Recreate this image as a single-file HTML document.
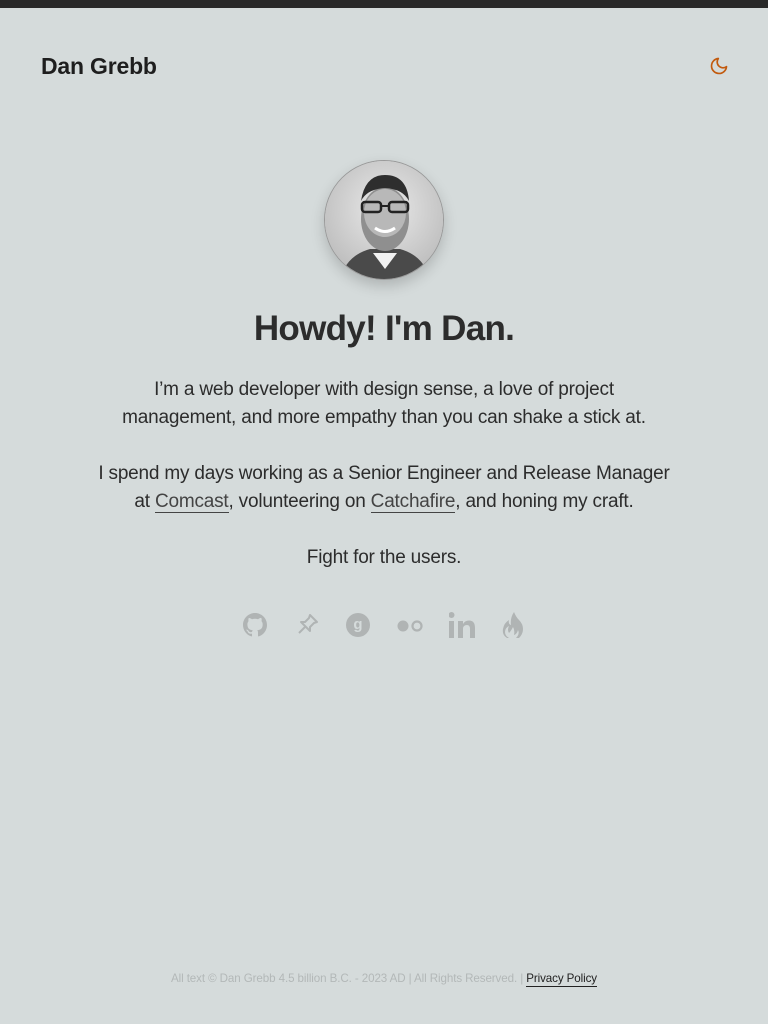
<!DOCTYPE html>
<html><head><meta charset="utf-8"><style>
*{margin:0;padding:0;box-sizing:border-box}
html,body{width:768px;height:1024px;background:#d5dbdb;font-family:"Liberation Sans",sans-serif;color:#2a2a2a;overflow:hidden}
.top{height:8px;background:#292929}
.logo{position:absolute;left:41px;top:53px;font-size:23px;font-weight:bold;letter-spacing:-0.2px;color:#1e1e1e}
.moon{position:absolute;left:709px;top:56px}
.av{position:absolute;left:324px;top:160px;width:120px;height:120px;border-radius:50%;overflow:hidden;box-shadow:0 6px 14px rgba(0,0,0,.18);border:1px solid #999}
h1{position:absolute;top:309px;width:768px;text-align:center;font-size:35px;letter-spacing:-0.7px;color:#2c2c2c}
p{position:absolute;width:768px;text-align:center;font-size:19px;line-height:28px;color:#2c2c2c;letter-spacing:-0.2px}
a{color:#444;text-decoration:none;border-bottom:1px solid #444}
.icons{position:absolute;top:612px;left:0;width:768px}
.icons svg{position:absolute;top:0}
.foot{position:absolute;top:972px;width:768px;text-align:center;font-size:11.6px;color:#b3b8b8;letter-spacing:-0.1px}
.foot a{color:#222;border-bottom:1px solid #222;padding-bottom:1px}
</style></head><body>
<div class="top"></div>
<div class="logo">Dan Grebb</div>
<svg class="moon" width="20" height="20" viewBox="0 0 24 24" fill="none" stroke="#c25a0e" stroke-width="2" stroke-linecap="round" stroke-linejoin="round"><path d="M21 12.79A9 9 0 1 1 11.21 3 7 7 0 0 0 21 12.79z"/></svg>
<div class="av"><svg width="120" height="120" viewBox="0 0 120 120">
<defs><radialGradient id="g" cx="50%" cy="40%" r="70%"><stop offset="0" stop-color="#eaeaea"/><stop offset="1" stop-color="#b5b5b5"/></radialGradient></defs>
<rect width="120" height="120" fill="url(#g)"/>
<path d="M15 120 Q20 95 45 88 L75 88 Q100 95 105 120Z" fill="#4a4a4a"/>
<path d="M48 92 L60 108 L72 92 Z" fill="#f2f2f2"/>
<ellipse cx="60" cy="58" rx="24" ry="32" fill="#8f8f8f"/>
<ellipse cx="60" cy="52" rx="21" ry="24" fill="#b8b8b8"/>
<path d="M36 40 Q40 14 60 14 Q82 14 84 40 Q78 28 60 27 Q42 28 36 40Z" fill="#2e2e2e"/>
<rect x="37" y="41" width="19" height="10" rx="3" fill="none" stroke="#222" stroke-width="2.5"/>
<rect x="64" y="41" width="19" height="10" rx="3" fill="none" stroke="#222" stroke-width="2.5"/>
<path d="M56 45 L64 45" stroke="#222" stroke-width="2"/>
<path d="M50 67 Q60 74 70 67" stroke="#fff" stroke-width="3" fill="none"/>
</svg></div>
<h1>Howdy! I'm Dan.</h1>
<p style="top:376px">I’m a web developer with design sense, a love of project<br>management, and more empathy than you can shake a stick at.</p>
<p style="top:460px">I spend my days working as a Senior Engineer and Release Manager<br>at <a>Comcast</a>, volunteering on <a>Catchafire</a>, and honing my craft.</p>
<p style="top:544px">Fight for the users.</p>
<div class="icons">
<svg style="left:243px" width="24" height="26" viewBox="0 0 16 16" fill="#b0b4b4"><path d="M8 0C3.58 0 0 3.58 0 8c0 3.54 2.29 6.53 5.47 7.59.4.07.55-.17.55-.38 0-.19-.01-.82-.01-1.49-2.01.37-2.53-.49-2.69-.94-.09-.23-.48-.94-.82-1.13-.28-.15-.68-.52-.01-.53.63-.01 1.08.58 1.23.82.72 1.21 1.87.87 2.33.66.07-.52.28-.87.51-1.07-1.78-.2-3.64-.89-3.64-3.95 0-.87.31-1.59.82-2.15-.08-.2-.36-1.02.08-2.12 0 0 .67-.21 2.2.82.64-.18 1.32-.27 2-.27.68 0 1.36.09 2 .27 1.53-1.04 2.2-.82 2.2-.82.44 1.1.16 1.92.08 2.12.51.56.82 1.27.82 2.15 0 3.07-1.87 3.75-3.65 3.95.29.25.54.73.54 1.48 0 1.07-.01 1.93-.01 2.2 0 .21.15.46.55.38A8.013 8.013 0 0016 8c0-4.42-3.58-8-8-8z"/></svg>
<svg style="left:296px" width="24" height="24" viewBox="0 0 24 24" fill="none" stroke="#b0b4b4" stroke-width="2" stroke-linejoin="round"><path d="M14 3 L21 10 L18 11 L14 15 L14 19 L5 10 L9 10 L13 6 Z M9.5 14.5 L3 21"/></svg>
<svg style="left:346px" width="24" height="26" viewBox="0 0 24 24"><circle cx="12" cy="12" r="12" fill="#b0b4b4"/><text x="12" y="16" text-anchor="middle" font-family="Liberation Sans" font-weight="bold" font-size="15" fill="#d5dbdb">g</text></svg>
<svg style="left:396px" width="28" height="26" viewBox="0 0 28 26"><circle cx="7" cy="14" r="5.5" fill="#b0b4b4"/><circle cx="21" cy="14" r="4.5" fill="none" stroke="#b0b4b4" stroke-width="2.2"/></svg>
<svg style="left:449px" width="26" height="26" viewBox="0 0 26 26" fill="#b0b4b4"><rect x="0" y="9" width="5" height="17"/><circle cx="2.5" cy="3" r="3"/><path d="M9 9 H14 V12 Q16 8.5 20 8.5 Q26 8.5 26 16 V26 H21 V17 Q21 13 18 13 Q14 13 14 17 V26 H9Z"/></svg>
<svg style="left:502px" width="24" height="28" viewBox="0 0 24 28" fill="#b0b4b4"><path d="M12 0 Q14 5 17 8 Q21 12 21 17 Q21 22 17 26 L14 26 Q18 22 16 18 Q15 22 12 23 Q13 18 11 15 Q9 19 7 21 Q5 18 7 14 Q3 16 3 20 Q3 24 7 26 L5 26 Q0 23 1 17 Q2 11 7 8 Q6 12 9 13 Q8 6 12 0Z"/></svg>
</div>
<div class="foot">All text © Dan Grebb 4.5 billion B.C. - 2023 AD | All Rights Reserved. | <a>Privacy Policy</a></div>
</body></html>
